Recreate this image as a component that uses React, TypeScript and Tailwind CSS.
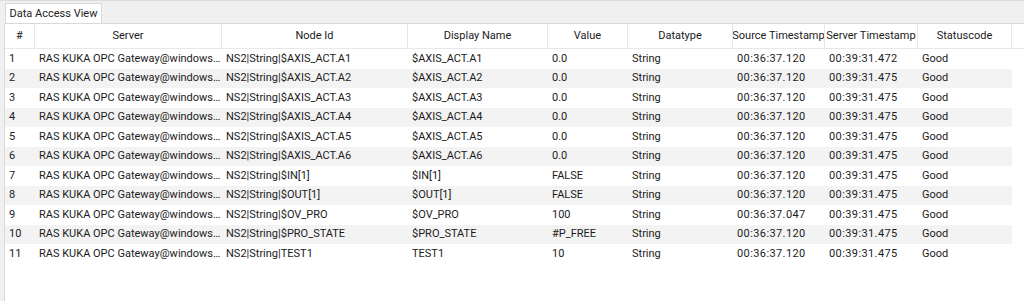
const columns = [
  { name: "#", width: 30, cls: "" },
  { name: "Server", width: 187, cls: "" },
  { name: "Node Id", width: 186, cls: "" },
  { name: "Display Name", width: 140, cls: "" },
  { name: "Value", width: 80, cls: "" },
  { name: "Datatype", width: 105, cls: "" },
  { name: "Source Timestamp", width: 92, cls: "tracking-[0.4px]" },
  { name: "Server Timestamp", width: 93, cls: "tracking-[0.4px]" },
  { name: "Statuscode", width: 94, cls: "" },
];

const server = "RAS KUKA OPC Gateway@windows…";

const rows = [
  ["1", server, "NS2|String|$AXIS_ACT.A1", "$AXIS_ACT.A1", "0.0", "String", "00:36:37.120", "00:39:31.472", "Good"],
  ["2", server, "NS2|String|$AXIS_ACT.A2", "$AXIS_ACT.A2", "0.0", "String", "00:36:37.120", "00:39:31.475", "Good"],
  ["3", server, "NS2|String|$AXIS_ACT.A3", "$AXIS_ACT.A3", "0.0", "String", "00:36:37.120", "00:39:31.475", "Good"],
  ["4", server, "NS2|String|$AXIS_ACT.A4", "$AXIS_ACT.A4", "0.0", "String", "00:36:37.120", "00:39:31.475", "Good"],
  ["5", server, "NS2|String|$AXIS_ACT.A5", "$AXIS_ACT.A5", "0.0", "String", "00:36:37.120", "00:39:31.475", "Good"],
  ["6", server, "NS2|String|$AXIS_ACT.A6", "$AXIS_ACT.A6", "0.0", "String", "00:36:37.120", "00:39:31.475", "Good"],
  ["7", server, "NS2|String|$IN[1]", "$IN[1]", "FALSE", "String", "00:36:37.120", "00:39:31.475", "Good"],
  ["8", server, "NS2|String|$OUT[1]", "$OUT[1]", "FALSE", "String", "00:36:37.120", "00:39:31.475", "Good"],
  ["9", server, "NS2|String|$OV_PRO", "$OV_PRO", "100", "String", "00:36:37.047", "00:39:31.475", "Good"],
  ["10", server, "NS2|String|$PRO_STATE", "$PRO_STATE", "#P_FREE", "String", "00:36:37.120", "00:39:31.475", "Good"],
  ["11", server, "NS2|String|TEST1", "TEST1", "10", "String", "00:36:37.120", "00:39:31.475", "Good"],
];

export default function App() {
  return (
    <div
      className="w-[1024px] h-[301px] bg-[#f0f0f0] flex flex-col text-[11px] text-[#1b1b1b] overflow-hidden"
      style={{ fontFamily: 'Roboto, "Noto Sans", sans-serif' }}
    >
      {/* barra de pestañas */}
      <div className="h-[23px] flex items-end pl-[5px] border-t border-[#dcdcdc]">
        <div className="h-[20px] w-[97px] bg-white border border-b-0 border-[#d9d9d9] flex items-center justify-center leading-none whitespace-nowrap">
          Data Access View
        </div>
      </div>

      {/* tabla */}
      <div className="flex-1 ml-[4px] bg-white border-l border-t border-[#d9d9d9]">
        <div className="flex h-[25px] border-b border-[#e8e8e8]">
          {columns.map((c) => (
            <div
              key={c.name}
              style={{ width: c.width }}
              className="shrink-0 border-r border-[#e8e8e8] flex items-center justify-center overflow-hidden whitespace-nowrap"
            >
              {c.name}
            </div>
          ))}
          <div className="flex-1" />
        </div>

        {rows.map((r, i) => (
          <div
            key={r[0]}
            className={`flex h-[19.5px] w-[1007px] ${i % 2 === 1 ? "bg-[#f3f3f3]" : "bg-white"}`}
          >
            {r.map((v, j) => (
              <div
                key={j}
                style={{ width: columns[j].width }}
                className={`shrink-0 pl-[4px] flex items-center overflow-hidden whitespace-nowrap ${columns[j].cls}`}
              >
                {v}
              </div>
            ))}
          </div>
        ))}
      </div>
    </div>
  );
}
